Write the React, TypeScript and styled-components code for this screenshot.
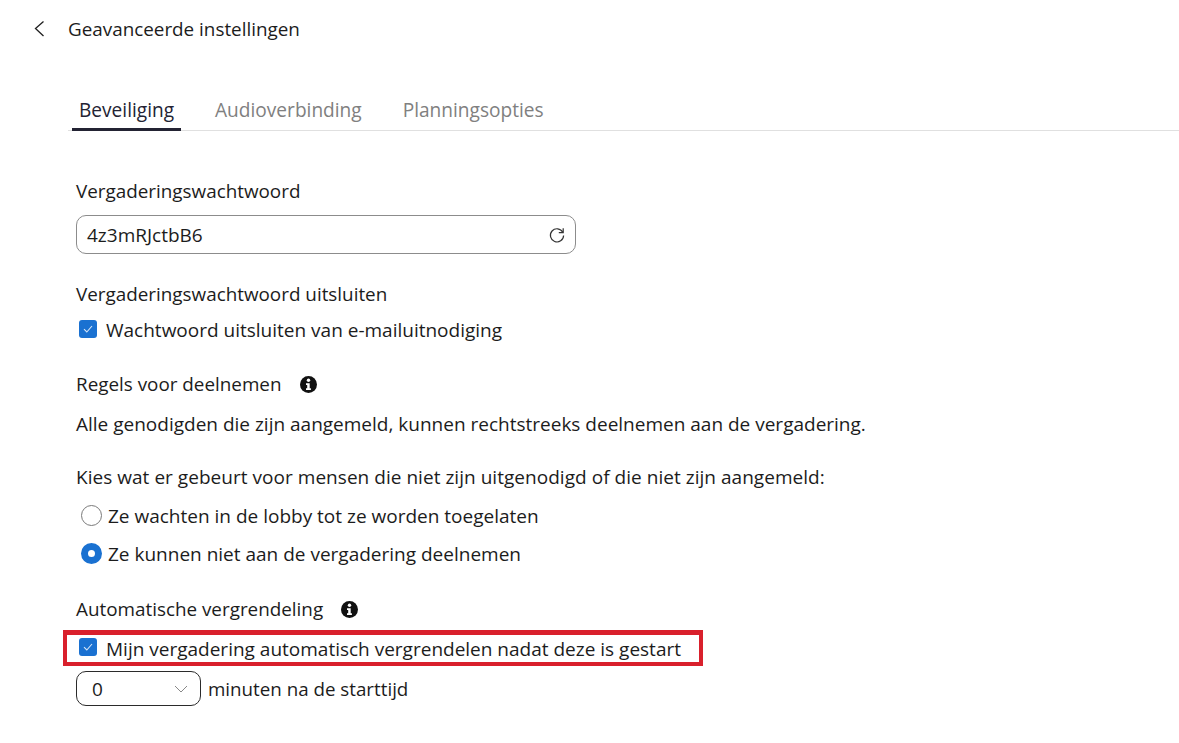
import React from "react";
import styled, { createGlobalStyle } from "styled-components";

const Global = createGlobalStyle`
  html, body { margin: 0; padding: 0; background: #fff; }
  body { font-family: "Open Sans", "Noto Sans", "Liberation Sans", sans-serif; color: #1c1c1c; }
`;
const Page = styled.div`
  width: 1179px;
  height: 743px;
  overflow: hidden;
  background: #fff;
  font-size: 19px;
`;
const Header = styled.header`
  display: flex;
  align-items: center;
  height: 58px;
  padding-left: 33px;
  gap: 22px;
  font-size: 18.85px;
`;
const BackIcon = styled.svg`
  width: 13px;
  height: 18px;
`;
const Tabs = styled.nav`
  display: flex;
  margin: 32px 0 0 68px;
  height: 41px;
  border-bottom: 1px solid #e0e0e0;
  box-sizing: border-box;
`;
const Tab = styled.div<{ $active?: boolean }>`
  box-sizing: border-box;
  height: 41px;
  padding: 7px 7px 0;
  margin: 0 23px 0 4px;
  font-size: 19.1px;
  color: ${(p) => (p.$active ? "#232333" : "#808080")};
  border-bottom: ${(p) => (p.$active ? "3px solid #232333" : "none")};
`;
const Content = styled.main`
  display: flex;
  flex-direction: column;
  padding: 48px 0 0 76px;
`;
const Label = styled.div`
  height: 25px;
  line-height: 25px;
  display: flex;
  align-items: center;
  font-size: 18.85px;
`;
const InputBox = styled.div`
  box-sizing: border-box;
  width: 500px;
  height: 39px;
  margin-top: 11px;
  padding: 0 9px 0 10px;
  display: flex;
  align-items: center;
  justify-content: space-between;
  border: 1px solid #8c8c8c;
  border-radius: 10px;
`;
const CheckRow = styled.label<{ $top: number }>`
  display: flex;
  align-items: center;
  gap: 9px;
  height: 25px;
  margin-top: ${(p) => p.$top}px;
  padding-left: 3px;
`;
const CheckBox = styled.span<{ $lift: number }>`
  width: 18px;
  height: 18px;
  border-radius: 3px;
  background: #1a71d1;
  display: flex;
  align-items: center;
  justify-content: center;
  position: relative;
  top: ${(p) => -p.$lift}px;
`;
const Section = styled.div<{ $top: number }>`
  margin-top: ${(p) => p.$top}px;
`;
const InfoWrap = styled.span`
  margin-left: 18px;
  display: inline-flex;
`;
const Para = styled.div<{ $top: number; $spacing?: number }>`
  height: 25px;
  line-height: 25px;
  margin-top: ${(p) => p.$top}px;
  letter-spacing: ${(p) => p.$spacing ?? 0}px;
`;
const RadioRow = styled.div<{ $top: number }>`
  display: flex;
  align-items: center;
  height: 25px;
  margin-top: ${(p) => p.$top}px;
  padding-left: 5px;
  gap: 6px;
`;
const Radio = styled.span<{ $on?: boolean }>`
  box-sizing: border-box;
  width: 21px;
  height: 21px;
  border-radius: 50%;
  background: #fff;
  border: ${(p) => (p.$on ? "7px solid #1a71d1" : "1px solid #7a7a7a")};
`;
const Highlight = styled.div`
  position: relative;
`;
const RedBox = styled.div`
  position: absolute;
  left: -13px;
  top: 8px;
  width: 640px;
  height: 36px;
  box-sizing: border-box;
  border: 4px solid #d9202c;
  border-top-width: 5px;
  pointer-events: none;
`;
const SelectRow = styled.div`
  display: flex;
  align-items: center;
  gap: 7px;
  margin-top: 10px;
`;
const SelectBox = styled.div`
  box-sizing: border-box;
  width: 125px;
  height: 35px;
  padding: 0 12px 0 15px;
  display: flex;
  align-items: center;
  justify-content: space-between;
  border: 1px solid #2b2b2b;
  border-radius: 10px;
`;
const SelectNote = styled.span`
  font-size: 18.75px;
`;

const Check = () => (
  <svg width="12" height="10" viewBox="0 0 12 10" fill="none">
    <path d="M2 5.2 L4.8 8 L10 2" stroke="#d6e6f8" strokeWidth="1.1" />
  </svg>
);
const Info = () => (
  <svg width="17" height="17" viewBox="0 0 17 17">
    <circle cx="8.5" cy="8.5" r="8.5" fill="#111" />
    <circle cx="8.5" cy="4.3" r="1.7" fill="#fff" />
    <path d="M6 7.2h3.7v5h1.2v1.8H6v-1.8h1.2V9H6z" fill="#fff" />
  </svg>
);

export default function App() {
  return (
    <Page>
      <Global />
      <Header>
        <BackIcon viewBox="0 0 13 18" fill="none">
          <path d="M10.5 1.5 L2.5 8.5 L10.5 16" stroke="#1f1f1f" strokeWidth="1.3" />
        </BackIcon>
        <span>Geavanceerde instellingen</span>
      </Header>
      <Tabs>
        <Tab $active>Beveiliging</Tab>
        <Tab>Audioverbinding</Tab>
        <Tab>Planningsopties</Tab>
      </Tabs>
      <Content>
        <Label>Vergaderingswachtwoord</Label>
        <InputBox>
          <span>4z3mRJctbB6</span>
          <svg width="18" height="18" viewBox="0 0 18 18" fill="none">
            <path d="M14.8 6.2 A6.6 6.6 0 1 0 15.6 9.5" stroke="#333" strokeWidth="1.2" />
            <path d="M15.2 2.2 V6.6 H10.8" stroke="#333" strokeWidth="1.2" />
          </svg>
        </InputBox>
        <Section $top={28}>
          <Label>Vergaderingswachtwoord uitsluiten</Label>
        </Section>
        <CheckRow $top={10}>
          <CheckBox $lift={1}><Check /></CheckBox>
          <span>Wachtwoord uitsluiten van e-mailuitnodiging</span>
        </CheckRow>
        <Section $top={30}>
          <Label>Regels voor deelnemen<InfoWrap><Info /></InfoWrap></Label>
        </Section>
        <Para $top={15}>Alle genodigden die zijn aangemeld, kunnen rechtstreeks deelnemen aan de vergadering.</Para>
        <Para $top={28} $spacing={0.035}>Kies wat er gebeurt voor mensen die niet zijn uitgenodigd of die niet zijn aangemeld:</Para>
        <RadioRow $top={13}>
          <Radio />
          <span>Ze wachten in de lobby tot ze worden toegelaten</span>
        </RadioRow>
        <RadioRow $top={13}>
          <Radio $on />
          <span>Ze kunnen niet aan de vergadering deelnemen</span>
        </RadioRow>
        <Section $top={31}>
          <Label>Automatische vergrendeling<InfoWrap><Info /></InfoWrap></Label>
        </Section>
        <Highlight>
          <CheckRow $top={14}>
            <CheckBox $lift={2}><Check /></CheckBox>
            <span>Mijn vergadering automatisch vergrendelen nadat deze is gestart</span>
          </CheckRow>
          <RedBox />
        </Highlight>
        <SelectRow>
          <SelectBox>
            <span>0</span>
            <svg width="14" height="8" viewBox="0 0 14 8" fill="none">
              <path d="M1 1 L7 7 L13 1" stroke="#888" strokeWidth="1" />
            </svg>
          </SelectBox>
          <SelectNote>minuten na de starttijd</SelectNote>
        </SelectRow>
      </Content>
    </Page>
  );
}
